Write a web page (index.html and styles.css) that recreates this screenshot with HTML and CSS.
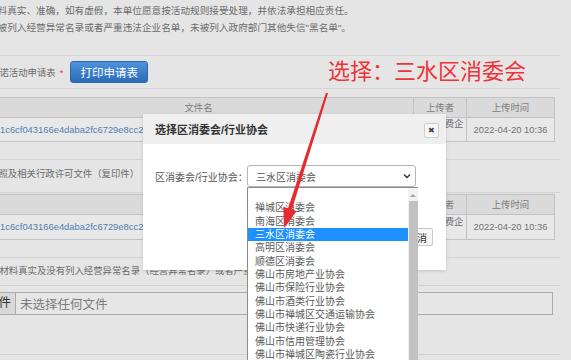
FILE: index.html
```html
<!DOCTYPE html>
<html lang="zh-CN">
<head>
    <meta charset="UTF-8">
    <title>承诺活动申请</title>
    <link rel="stylesheet" href="styles.css">
</head>
<body>
    <div class="page">
        <div class="notice">
            <p>资料真实、准确，如有虚假，本单位愿意按活动规则接受处理，并依法承担相应责任。</p>
            <p>未被列入经营异常名录或者严重违法企业名单，未被列入政府部门其他失信"黑名单"。</p>
        </div>
        <div class="row print-row">
            <span class="label">承诺活动申请表</span><span class="req">*</span>
            <button class="btn-print">打印申请表</button>
        </div>
        <div class="row files first">
            <table class="file-table">
                <colgroup><col class="c-name"><col class="c-user"><col class="c-time"></colgroup>
                <tr><th>文件名</th><th>上传者</th><th>上传时间</th></tr>
                <tr>
                    <td class="name"><a href="#">1c6cf043166e4daba2fc6729e8cc2f0d.pdf</a></td>
                    <td class="user">测试消费企业</td>
                    <td class="time">2022-04-20 10:36</td>
                </tr>
            </table>
        </div>
        <div class="row label-row">执照及相关行政许可文件（复印件）</div>
        <div class="row files second">
            <table class="file-table">
                <colgroup><col class="c-name"><col class="c-user"><col class="c-time"></colgroup>
                <tr><th>文件名</th><th>上传者</th><th>上传时间</th></tr>
                <tr class="tall">
                    <td class="name"><a href="#">1c6cf043166e4daba2fc6729e8cc2a9b.pdf</a></td>
                    <td class="user">测试消费企业</td>
                    <td class="time">2022-04-20 10:36</td>
                </tr>
            </table>
        </div>
        <div class="row label-row third">诺材料真实及没有列入经营异常名录（经营异常名录）或者严重违法企业名单</div>
        <div class="row upload-row">
            <div class="file-input">
                <span class="file-btn">选择文件</span>
                <span class="file-empty">未选择任何文件</span>
            </div>
        </div>
    </div>

    <!-- dialog -->
    <div class="modal">
        <div class="modal-head">
            <span class="modal-title">选择区消委会/行业协会</span>
            <span class="close">&#10006;</span>
        </div>
        <div class="modal-body">
            <div class="field">
                <span class="field-label">区消委会/行业协会：</span>
                <div class="select">
                    <span>三水区消委会</span>
                    <svg class="chev" width="8" height="6" viewBox="0 0 8 6"><path d="M1 1.5 L4 4.5 L7 1.5" fill="none" stroke="#333" stroke-width="1.4"/></svg>
                </div>
            </div>
        </div>
        <div class="modal-foot">
            <button class="btn">确定</button>
            <button class="btn">取消</button>
        </div>
        <div class="dropdown">
            <ul class="opts">
                <li>&nbsp;</li>
                <li>禅城区消委会</li>
                <li>南海区消委会</li>
                <li class="active">三水区消委会</li>
                <li>高明区消委会</li>
                <li>顺德区消委会</li>
                <li>佛山市房地产业协会</li>
                <li>佛山市保险行业协会</li>
                <li>佛山市酒类行业协会</li>
                <li>佛山市禅城区交通运输协会</li>
                <li>佛山市快递行业协会</li>
                <li>佛山市信用管理协会</li>
                <li>佛山市禅城区陶瓷行业协会</li>
                <li>佛山市家具行业协会</li>
            </ul>
            <div class="scroll">
                <span class="up"></span>
                <span class="thumb"></span>
            </div>
        </div>
    </div>

    <!-- annotation -->
    <div class="annot">选择：三水区消委会</div>
    <svg class="arrow" width="571" height="360" viewBox="0 0 571 360">
        <polygon points="326,92.7 328,93.3 291.9,209.5 296.7,211 284,228 283.3,206.8 288.1,208.3" fill="#e8292f"/>
    </svg>
</body>
</html>
```

FILE: styles.css
```css
* {
    box-sizing: border-box;
}
body {
    margin: 0;
    width: 571px;
    height: 360px;
    overflow: hidden;
    position: relative;
    background: #e5e5e5;
    font-family: 'Liberation Sans', 'Noto Sans CJK SC', sans-serif;
    font-size: 9.4px;
    color: #6c6c6c;
}
.page {
    margin-left: -20px;
    width: 580px;
}
.row {
    border-bottom: 1px solid #d3d3d3;
}
.notice {
    height: 56px;
    padding: 1.5px 0 0 8px;
    line-height: 17px;
    font-size: 9.65px;
    border-bottom: 1px solid #d3d3d3;
}
.notice p {
    margin: 0;
    white-space: nowrap;
}
.print-row {
    height: 33px;
    display: flex;
    align-items: center;
    padding-left: 10px;
}
.req {
    color: #e4393c;
    margin-left: 4px;
}
.btn-print {
    margin-left: 7px;
    width: 78px;
    height: 22px;
    border: 1px solid #2d68ad;
    border-radius: 3px;
    background: linear-gradient(#4d93db, #2b6cb6);
    color: #fff;
    font-family: inherit;
    font-size: 11.5px;
    padding: 0;
}
.files.first {
    padding: 8px 0 17px 3px;
}
.files.second {
    padding: 1px 0 17px 3px;
}
.file-table {
    border-collapse: collapse;
    table-layout: fixed;
    width: 571px;
}
.c-name { width: 430px; }
.c-user { width: 53px; }
.c-time { width: 88px; }
.file-table th,
.file-table td {
    border: 1px solid #c2c2c2;
    padding: 0 2px;
    line-height: 11.5px;
}
.file-table th {
    height: 20px;
    background: #dadada;
    font-weight: normal;
    color: #7a7a7a;
}
.file-table td {
    height: 24px;
    background: #e8e8e8;
}
.file-table .tall td {
    height: 25px;
}
.file-table td.name {
    padding-left: 16px;
    white-space: nowrap;
    overflow: hidden;
}
.file-table td.name a {
    color: #4f80b6;
    text-decoration: none;
}
.file-table td.user {
    text-align: center;
}
.file-table td.time {
    text-align: center;
    white-space: nowrap;
    color: #707070;
}
.label-row {
    height: 33px;
    padding: 6px 0 0 9px;
    line-height: 15px;
    white-space: nowrap;
}
.label-row.third {
    height: 28px;
    padding-top: 5px;
    padding-left: 10px;
}
.upload-row {
    height: 69px;
    padding-top: 6px;
}
.file-input {
    display: flex;
    align-items: center;
    height: 23px;
    width: 597px;
    margin-left: -24px;
    border: 1px solid #ababab;
    background: #e6e6e6;
}
.file-btn {
    height: 100%;
    padding: 0 4px;
    line-height: 21px;
    background: #d9d9d9;
    border-right: 1px solid #ababab;
    font-size: 12.5px;
    color: #333;
}
.file-empty {
    margin-left: 4px;
    font-size: 12.5px;
    color: #7c7c7c;
}

/* dialog */
.modal {
    position: absolute;
    left: 143px;
    top: 114px;
    width: 303px;
    height: 156px;
    background: #fff;
    box-shadow: 0 1px 3px rgba(0, 0, 0, 0.15);
    font-size: 10px;
    color: #555;
}
.modal-head {
    height: 30px;
    background: #efefef;
    display: flex;
    align-items: center;
    justify-content: space-between;
    padding: 0 7px 0 12px;
}
.modal-title {
    font-size: 11px;
    font-weight: bold;
    color: #333;
}
.close {
    width: 15px;
    height: 15px;
    margin-top: 2px;
    border: 1px solid #d0d0d0;
    border-radius: 2px;
    background: #f7f7f7;
    color: #444;
    font-size: 8px;
    line-height: 13px;
    text-align: center;
}
.modal-body {
    padding: 21px 12px 0;
}
.field {
    display: flex;
    align-items: center;
}
.field-label {
    width: 92px;
    white-space: nowrap;
}
.select {
    width: 169px;
    height: 22px;
    border: 1px solid #b5b5b5;
    border-radius: 3px;
    display: flex;
    align-items: center;
    justify-content: space-between;
    padding: 0 4px 0 8px;
}
.modal-foot {
    display: flex;
    justify-content: flex-end;
    gap: 4px;
    margin-top: 41px;
    padding-right: 13px;
}
.btn {
    height: 18px;
    padding: 0 5px;
    border: 1px solid #c8c8c8;
    border-radius: 2px;
    background: #f6f6f6;
    font-family: inherit;
    font-size: 10px;
    color: #333;
}
.dropdown {
    position: absolute;
    left: 104px;
    top: 73px;
    width: 171px;
    height: 190px;
    background: #fff;
    border: 1px solid #8c8c8c;
    border-right: none;
    display: flex;
}
.opts {
    flex: 1;
    margin: 0;
    padding: 0;
    list-style: none;
}
.opts li {
    height: 13.33px;
    line-height: 13.33px;
    padding-left: 7px;
    white-space: nowrap;
    color: #5a5a5a;
}
.opts li.active {
    background: #1e90ff;
    color: #fff;
}
.scroll {
    width: 10px;
    background: #f1f1f1;
    display: flex;
    flex-direction: column;
    align-items: center;
}
.up {
    margin-top: 6px;
    width: 0;
    height: 0;
    border-left: 3px solid transparent;
    border-right: 3px solid transparent;
    border-bottom: 3px solid #a3a3a3;
}
.thumb {
    margin-top: 4px;
    width: 9px;
    flex: 1;
    background: #c1c1c1;
}

/* annotation */
.annot {
    position: absolute;
    left: 328px;
    top: 56px;
    font-family: 'Noto Sans CJK SC', sans-serif;
    font-size: 22px;
    line-height: 26px;
    color: #ee3439;
    white-space: nowrap;
}
.arrow {
    position: absolute;
    left: 0;
    top: 0;
    pointer-events: none;
}
```
